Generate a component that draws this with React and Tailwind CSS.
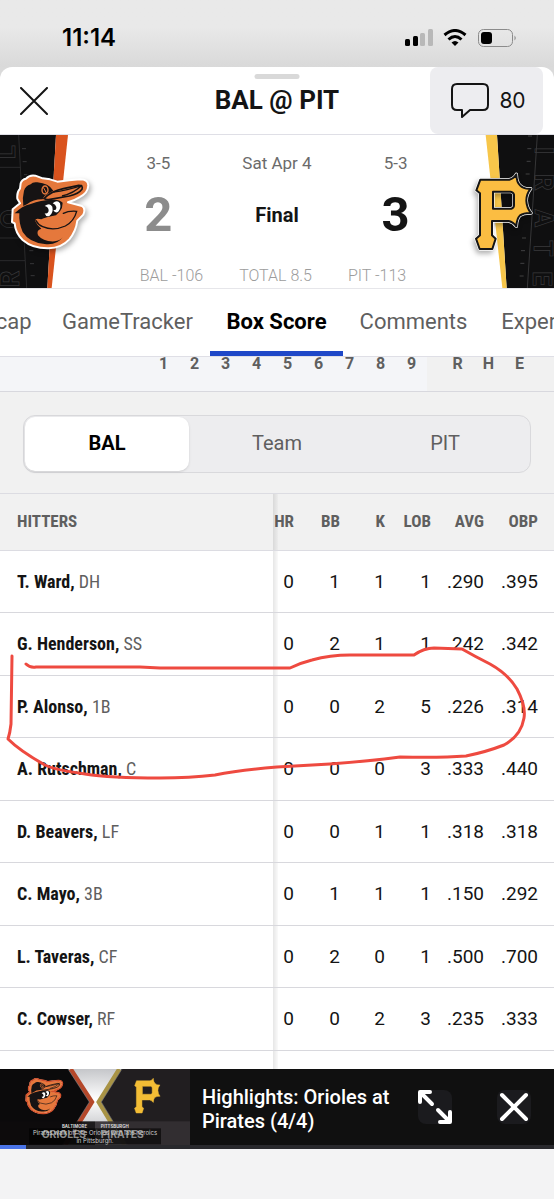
import React, { useState } from "react";

const TABS = [
	{ name: "Recap", width: "w-[88px]" },
	{ name: "GameTracker", width: "w-[165px]" },
	{ name: "Box Score", width: "w-[133px]" },
	{ name: "Comments", width: "w-[141px]" },
	{ name: "Expert Picks", width: "w-[156px]" },
];

const INNINGS = [1, 2, 3, 4, 5, 6, 7, 8, 9];

const SIDES = ["BAL", "Team", "PIT"];

const HITTERS = [
	{ name: "T. Ward", pos: "DH", stats: ["0", "1", "1", "1", ".290", ".395"] },
	{ name: "G. Henderson", pos: "SS", stats: ["0", "2", "1", "1", ".242", ".342"] },
	{ name: "P. Alonso", pos: "1B", stats: ["0", "0", "2", "5", ".226", ".314"] },
	{ name: "A. Rutschman", pos: "C", stats: ["0", "0", "0", "3", ".333", ".440"] },
	{ name: "D. Beavers", pos: "LF", stats: ["0", "0", "1", "1", ".318", ".318"] },
	{ name: "C. Mayo", pos: "3B", stats: ["0", "1", "1", "1", ".150", ".292"] },
	{ name: "L. Taveras", pos: "CF", stats: ["0", "2", "0", "1", ".500", ".700"] },
	{ name: "C. Cowser", pos: "RF", stats: ["0", "0", "2", "3", ".235", ".333"] },
];

const COLUMNS = [
	{ label: "HR", width: "w-[21px]" },
	{ label: "BB", width: "w-[46px]" },
	{ label: "K", width: "w-[45px]" },
	{ label: "LOB", width: "w-[46px]" },
	{ label: "AVG", width: "w-[53px]" },
	{ label: "OBP", width: "w-[70px] pr-4" },
];

const NAME_SHADOW =
	"relative after:absolute after:inset-y-0 after:left-full after:w-[5px] after:bg-linear-to-r after:from-black/10 after:to-black/2";

const BIRD_OUTLINE =
	"M62 160 Q66 148 78 146 Q88 134 106 137 L128 145 L150 148 L172 155 Q210 150 240 148 Q264 148 265 166 Q264 190 238 202 Q222 212 204 217 L246 228 Q258 236 250 254 L232 272 Q228 304 208 328 Q184 354 146 355 Q98 356 68 330 Q46 308 44 280 L36 276 L38 238 L60 220 L52 206 Q50 186 60 176 Z";

const OriolesBird = () => (
	<g>
		<path d={BIRD_OUTLINE} fill="#e5783c" stroke="#ffffff" strokeWidth="6" strokeLinejoin="round" />
		<path
			d="M72 182 Q76 168 92 163 Q98 155 112 157 Q146 160 160 182 L146 190 Q132 196 128 208 Q98 208 82 222 L70 228 Q66 204 72 182 Z"
			fill="#161314"
		/>
		<path
			d="M58 250 L44 250 Q66 228 92 222 Q124 210 152 210 Q176 206 188 218 Q188 234 180 244 L168 256 Q136 262 124 268 Q104 262 106 274 Q112 288 124 296 Q108 300 114 316 Q130 336 164 334 Q180 332 188 322 Q172 346 134 342 Q88 338 68 306 Q56 278 58 250 Z"
			fill="#161314"
		/>
		<path
			d="M132 206 Q152 184 190 176 L236 166 Q250 166 246 178 Q236 192 208 198 L150 208 Q138 210 132 206 Z"
			fill="#e5783c"
			stroke="#161314"
			strokeWidth="5"
		/>
		<path d="M160 186 Q200 182 246 166 Q222 190 186 198" fill="none" stroke="#161314" strokeWidth="4" />
		<path
			d="M190 250 Q206 242 230 244 Q222 274 196 288 Q160 304 128 290 Q114 284 108 272"
			fill="none"
			stroke="#161314"
			strokeWidth="4"
			strokeLinecap="round"
		/>
		<ellipse cx="135" cy="180" rx="9" ry="12" fill="none" stroke="#e5783c" strokeWidth="4" />
		<path d="M130 172 L140 190" stroke="#e5783c" strokeWidth="3" />
		<path
			d="M134 228 Q150 216 157 230 Q161 248 148 258 Q138 262 134 250 Q146 252 146 240 Q144 230 134 228 Z"
			fill="#ffffff"
		/>
		<path
			d="M158 220 Q172 208 180 220 Q184 236 174 246 Q164 250 160 240 Q170 242 169 231 Q167 223 158 220 Z"
			fill="#ffffff"
		/>
	</g>
);

const PIRATES_PATH =
	"M169 149 L256 149 Q270 146 277 133 Q278 158 288 166 Q300 178 320 176 Q307 192 307 212 Q308 234 321 249 Q300 248 288 256 Q278 266 277 289 Q268 276 254 273 L204 273 L204 316 L215 326 L205 357 L167 357 L156 326 L168 316 L168 190 L157 181 Z M207 185 L207 236 L262 236 Q270 234 270 226 L270 194 Q268 186 260 185 Z";

const PiratesP = () => (
	<g strokeLinejoin="round" fillRule="evenodd">
		<path d={PIRATES_PATH} fill="none" stroke="#ffffff" strokeWidth="10" />
		<path d={PIRATES_PATH} fill="#fbbd42" stroke="#151515" strokeWidth="6" />
	</g>
);

const AwayBanner = () => (
	<svg
		viewBox="0 15 276 459"
		className="h-[153px] w-[92px] shrink-0 overflow-visible"
		role="img"
		aria-label="Baltimore Orioles">
		<path d="M0 15 H168 L142 474 H0 Z" fill="#0f0f10" />
		<path d="M168 15 H204 L155 474 H142 Z" fill="#d9531e" />
		<path d="M56 15 L80 474 M0 112 H61 M0 324 H72 M0 392 H75" stroke="#38383a" strokeWidth="2" fill="none" />
		<path
			d="M66 56 H78 M68 95 H80 M72 134 H82 M88 362 H100 M90 401 H102 M92 437 H104"
			stroke="#4a4a4c"
			strokeWidth="2"
		/>
		<g
			fill="none"
			stroke="#38383a"
			strokeWidth="2"
			fontSize="76"
			fontWeight="700"
			style={{ fontFamily: "Inter, sans-serif" }}>
			<text transform="translate(58 472) rotate(-90)">R</text>
			<text transform="translate(56 296) rotate(-90)">O</text>
			<text transform="translate(46 88) rotate(-90)">L</text>
		</g>
		<g className="drop-shadow-[6px_8px_8px_rgba(0,0,0,0.3)]">
			<OriolesBird />
		</g>
	</svg>
);

const HomeBanner = () => (
	<svg
		viewBox="114 15 276 459"
		className="h-[153px] w-[92px] shrink-0 overflow-visible"
		role="img"
		aria-label="Pittsburgh Pirates">
		<path d="M219 15 H390 V474 H248 Z" fill="#0f0f10" />
		<path d="M185 15 H219 L248 474 H235 Z" fill="#f7c64a" />
		<path d="M340 15 L310 474" stroke="#4a4a4c" strokeWidth="2" />
		<path
			d="M312 18 H324 M310 56 H322 M308 94 H320 M305 132 H317 M294 324 H306 M291 362 H303 M289 400 H301 M287 438 H299"
			stroke="#5a5a5c"
			strokeWidth="2"
		/>
		<g
			fill="none"
			stroke="#38383a"
			strokeWidth="2"
			fontSize="76"
			fontWeight="700"
			style={{ fontFamily: "Inter, sans-serif" }}>
			<text transform="translate(334 52) rotate(90)">I</text>
			<text transform="translate(334 132) rotate(90)">R</text>
			<text transform="translate(332 236) rotate(90)">A</text>
			<text transform="translate(330 330) rotate(90)">T</text>
			<text transform="translate(328 424) rotate(90)">E</text>
		</g>
		<g className="drop-shadow-[-5px_9px_8px_rgba(0,0,0,0.3)]">
			<PiratesP />
		</g>
	</svg>
);

const VideoThumb = () => (
	<svg viewBox="0 87 570 228" className="h-[76px] w-[190px] shrink-0" role="img" aria-label="Highlights video">
		<defs>
			<radialGradient id="glow" cx="50%" cy="40%" r="60%">
				<stop offset="0" stopColor="#ffffff" />
				<stop offset="1" stopColor="#a9abb0" />
			</radialGradient>
		</defs>
		<rect y="87" width="570" height="228" fill="url(#glow)" />
		<path d="M0 87 H205 L270 186 L190 315 H0 Z" fill="#0b0a0b" />
		<path d="M570 87 H364 L302 186 L380 315 H570 Z" fill="#211e20" />
		<path d="M212 87 L276 186 L196 315" fill="none" stroke="#b5482a" strokeWidth="13" />
		<path d="M358 87 L296 186 L374 315" fill="none" stroke="#a89345" strokeWidth="13" />
		<path d="M204 87 L268 186 L188 315 M366 87 L304 186 L382 315" fill="none" stroke="#77777a" strokeWidth="2" />
		<g transform="translate(61 51) scale(.477)">
			<OriolesBird />
			<path d={BIRD_OUTLINE} fill="none" stroke="#d2502a" strokeWidth="9" />
		</g>
		<path
			d={PIRATES_PATH}
			transform="translate(331 53) scale(.465)"
			fill="#f3bd35"
			stroke="#f3bd35"
			strokeWidth="3"
			fillRule="evenodd"
		/>
		<rect y="244" width="285" height="71" fill="#0e0c0d" fillOpacity=".92" />
		<rect x="285" y="244" width="285" height="71" fill="#343033" fillOpacity=".92" />
		<rect x="87" y="265" width="396" height="48" fill="#000000" fillOpacity=".6" />
		<g fontWeight="700" style={{ fontFamily: "Inter, sans-serif" }}>
			<text x="186" y="264" fontSize="13" fill="#d8d8d8">BALTIMORE</text>
			<text x="302" y="264" fontSize="13" fill="#d8d8d8">PITTSBURGH</text>
			<text x="125" y="295" fontSize="31" fill="#8c8c8c">ORIOLES</text>
			<text x="302" y="295" fontSize="31" fill="#8c8c8c">PIRATES</text>
		</g>
		<g fontSize="18" fill="#cfcfcf" textAnchor="middle" style={{ fontFamily: "Inter, sans-serif" }}>
			<text x="285" y="284">Pirates walk off the Orioles with late heroics</text>
			<text x="285" y="309">in Pittsburgh.</text>
		</g>
	</svg>
);

const StatusBar = () => (
	<div className="flex h-[67px] items-center justify-between bg-linear-to-b from-[#e9e9e9] from-40% to-[#d9d9d9] pl-[62px] pr-[37px] pt-2">
		<span className="font-[Inter] text-2xl font-semibold leading-7 text-black">11:14</span>
		<svg viewBox="0 0 112 18" className="h-[18px] w-28" aria-hidden="true">
			<rect x="0" y="10" width="5" height="7" rx="1.5" />
			<rect x="8" y="7" width="5" height="10" rx="1.5" />
			<rect x="15" y="4" width="5" height="13" rx="1.5" fill="#b8b8b8" />
			<rect x="23" y="0" width="5" height="17" rx="1.5" fill="#b8b8b8" />
			<g fill="none" stroke="#000000" strokeWidth="3">
				<path d="M39.5 6 Q50 -3 60.500 6" />
				<path d="M43.500 10.500 Q50 4.500 56.500 10.500" />
			</g>
			<path d="M46.500 13.500 Q50 10.500 53.500 13.500 L50 17 Z" />
			<rect x="73.500" y=".5" width="34" height="17" rx="5" fill="none" stroke="#8b8b8b" />
			<rect x="76" y="3" width="11" height="12" rx="3" />
			<path d="M109.500 6.500 Q112 9 109.500 11.500 Z" fill="#8b8b8b" />
		</svg>
	</div>
);

const App = () => {
	const [tab, setTab] = useState("Box Score");
	const [side, setSide] = useState("BAL");
	const [showVideo, setShowVideo] = useState(true);

	return (
		<div className="flex min-h-screen flex-col bg-[#dadada] font-[Roboto,sans-serif] text-[#141414]">
			<StatusBar />

			<div className="flex flex-1 flex-col overflow-hidden rounded-t-xl bg-white">
				<header className="relative flex h-[68px] items-center justify-between border-b border-[#dfdfe6] pl-5 pr-[11px]">
					<button type="button" aria-label="Close">
						<svg viewBox="0 0 28 28" className="size-7" stroke="#141414" strokeWidth="2" strokeLinecap="round">
							<path d="M1 1 L27 27 M27 1 L1 27" />
						</svg>
					</button>
					<div className="absolute left-1/2 top-[7px] h-[5px] w-[45px] -translate-x-1/2 rounded-full bg-[#d9d9d9]" />
					<h1 className="absolute left-1/2 top-[15px] -translate-x-1/2 text-[26px] font-bold leading-9">BAL @ PIT</h1>
					<button
						type="button"
						aria-label="80 comments"
						className="flex h-[67px] w-[113px] items-center justify-center gap-[10px] rounded-lg bg-[#ededf0] pl-1">
						<svg viewBox="0 0 38 35" className="h-[35px] w-[38px]" fill="none" stroke="#141414" strokeWidth="2" strokeLinejoin="round">
							<path d="M6 1 H32 Q37 1 37 6 V22 Q37 27 32 27 H19 L11 34 V27 H6 Q1 27 1 22 V6 Q1 1 6 1 Z" />
						</svg>
						<span className="font-[Inter] text-[21px] leading-7">80</span>
					</button>
				</header>

				<section className="flex h-[154px] justify-between border-b border-[#e6e6ea]">
					<AwayBanner />
					<div className="flex flex-1 flex-col items-center pt-[18px]">
						<div className="grid w-[356px] grid-cols-3 text-center text-[17px] leading-5 text-[#6b6b6b]">
							<span>3-5</span>
							<span>Sat Apr 4</span>
							<span>5-3</span>
						</div>
						<div className="mt-[9px] grid w-[356px] grid-cols-3 items-center text-center text-[49px] font-bold leading-[66px]">
							<span className="text-[#8c8c8c]">2</span>
							<span className="text-xl">Final</span>
							<span>3</span>
						</div>
						<div className="mt-[18px] flex w-[356px] justify-center gap-9 pr-2 text-base font-light leading-5 text-[#9c9c9c]">
							<span>BAL -106</span>
							<span>TOTAL 8.5</span>
							<span>PIT -113</span>
						</div>
					</div>
					<HomeBanner />
				</section>

				<nav className="overflow-hidden border-b border-[#dfdfe6]">
					<div className="-ml-[43px] flex w-max">
						{TABS.map((t) => (
							<button
								key={t.name}
								type="button"
								onClick={() => setTab(t.name)}
								className={`h-[67px] border-b-[5px] pt-1 text-center text-[22px] leading-7 whitespace-nowrap ${t.width} ${
									tab === t.name
										? "border-[#1f48c8] font-bold text-black"
										: "border-transparent text-[#5f5f5f]"
								}`}>
								{t.name}
							</button>
						))}
					</div>
				</nav>

				<main className="relative flex-1 overflow-hidden">
					<table className="w-full table-fixed bg-[#f1f1f1] text-base font-bold leading-[14px] text-[#5f5f5f]">
						<thead>
							<tr className="h-[34px] border-b border-[#d8d8de] align-top">
								<td className="bg-[#f4f5f8]" />
								{INNINGS.map((n) => (
									<th key={n} scope="col" className="w-[31px] bg-[#f4f5f8]">
										{n}
									</th>
								))}
								<th scope="col" className="w-[46px] pl-[15px]">R</th>
								<th scope="col" className="w-[31px]">H</th>
								<th scope="col" className="w-[50px] pr-[19px]">E</th>
							</tr>
						</thead>
					</table>

					<div className="border-b border-[#dcdce2] bg-[#f1f1f1] px-[23px] pb-5 pt-[23px]">
						<div className="grid h-[58px] grid-cols-3 rounded-xl border border-[#d9d9dc] bg-[#ededef] p-px">
							{SIDES.map((s) => (
								<button
									key={s}
									type="button"
									aria-pressed={side === s}
									onClick={() => setSide(s)}
									className={`rounded-[10px] pb-px text-xl leading-7 ${
										side === s ? "mr-1 bg-white font-bold text-black shadow-sm" : "text-[#5f5f5f]"
									}`}>
									{s}
								</button>
							))}
						</div>
					</div>

					<div className="relative">
						<table className="w-full table-fixed">
							<thead>
								<tr className="h-[57px] border-b border-[#dcdce2] bg-[#f1f1f1] font-['Roboto_Condensed',Roboto,sans-serif] text-[17px] text-[#5f5f5f]">
									<th scope="col" className={`pl-[17px] text-left ${NAME_SHADOW}`}>
										HITTERS
									</th>
									{COLUMNS.map((c) => (
										<th key={c.label} scope="col" className={`text-right ${c.width}`}>
											{c.label}
										</th>
									))}
								</tr>
							</thead>
							<tbody className="text-[19px] leading-6">
								{HITTERS.map((h) => (
									<tr key={h.name} className="border-b border-[#d8d8dd] odd:h-[62px] even:h-[63px]">
										<th
											scope="row"
											className={`pl-[17px] text-left font-['Roboto_Condensed',Roboto,sans-serif] text-[18px] font-bold ${NAME_SHADOW}`}>
											{h.name}, <span className="font-normal text-[#5f5f5f]">{h.pos}</span>
										</th>
										{h.stats.map((value, i) => (
											<td key={COLUMNS[i].label} className={i === 5 ? "pr-4 text-right" : "text-right"}>
												{value}
											</td>
										))}
									</tr>
								))}
								<tr className="h-[18px]">
									<td className={NAME_SHADOW} />
								</tr>
							</tbody>
						</table>

						{/* hand-drawn circle around Alonso's line */}
						<svg
							viewBox="0 0 554 300"
							preserveAspectRatio="none"
							className="pointer-events-none absolute inset-x-0 top-0 h-[300px] w-full"
							fill="none"
							stroke="#ee4a40"
							strokeWidth="3"
							strokeLinecap="round"
							strokeLinejoin="round"
							aria-hidden="true">
							<path d="M26 170 Q30 174 36 173 L65 173 L100 173 L140 173 L160 174 L210 174 L260 174 L290 174 Q300 169 312 166 Q330 161 350 161 L414 161 Q424 154 434 154 L462 155 Q476 163 490 170 Q508 180 517 195 Q526 212 524 224 Q521 242 504 251 Q486 258 466 262 Q440 264 400 263 Q370 267 330 270 L277 273 Q240 276 215 281 Q190 284 160 284 Q110 284 85 280 Q55 276 45 271 Q20 257 8 245 Q10 239 11 230 L12 162" />
						</svg>
					</div>
				</main>
			</div>

			{showVideo && (
				<aside className="bg-[#101010] text-white">
					<div className="flex h-[76px] items-center">
						<VideoThumb />
						<p className="flex-1 pl-3 pt-1 text-[20px] font-medium leading-6">
							Highlights: Orioles at
							<br />
							Pirates (4/4)
						</p>
						<button type="button" aria-label="Expand" className="mr-[45px] rounded-lg bg-[#1b1b1e]">
							<svg viewBox="0 0 34 34" className="size-[34px]" fill="none" stroke="#ffffff" strokeWidth="4" strokeLinecap="round" strokeLinejoin="round">
								<path d="M2 12 V2 H12 M3 3 L14 14 M20 20 L31 31 M32 22 V32 H22" />
							</svg>
						</button>
						<button
							type="button"
							aria-label="Close video"
							onClick={() => setShowVideo(false)}
							className="mr-[23px] rounded-lg bg-[#1b1b1e]">
							<svg viewBox="0 0 34 34" className="size-[34px]" fill="none" stroke="#ffffff" strokeWidth="4" strokeLinecap="round">
								<path d="M5 5 L29 29 M29 5 L5 29" />
							</svg>
						</button>
					</div>
					<div className="h-1 bg-[#29292d]">
						<div className="h-1 w-[26px] bg-[#4a74e8]" />
					</div>
				</aside>
			)}
			<div className="h-[50px] bg-[#f3f3f4]" />
		</div>
	);
};

export default App;
